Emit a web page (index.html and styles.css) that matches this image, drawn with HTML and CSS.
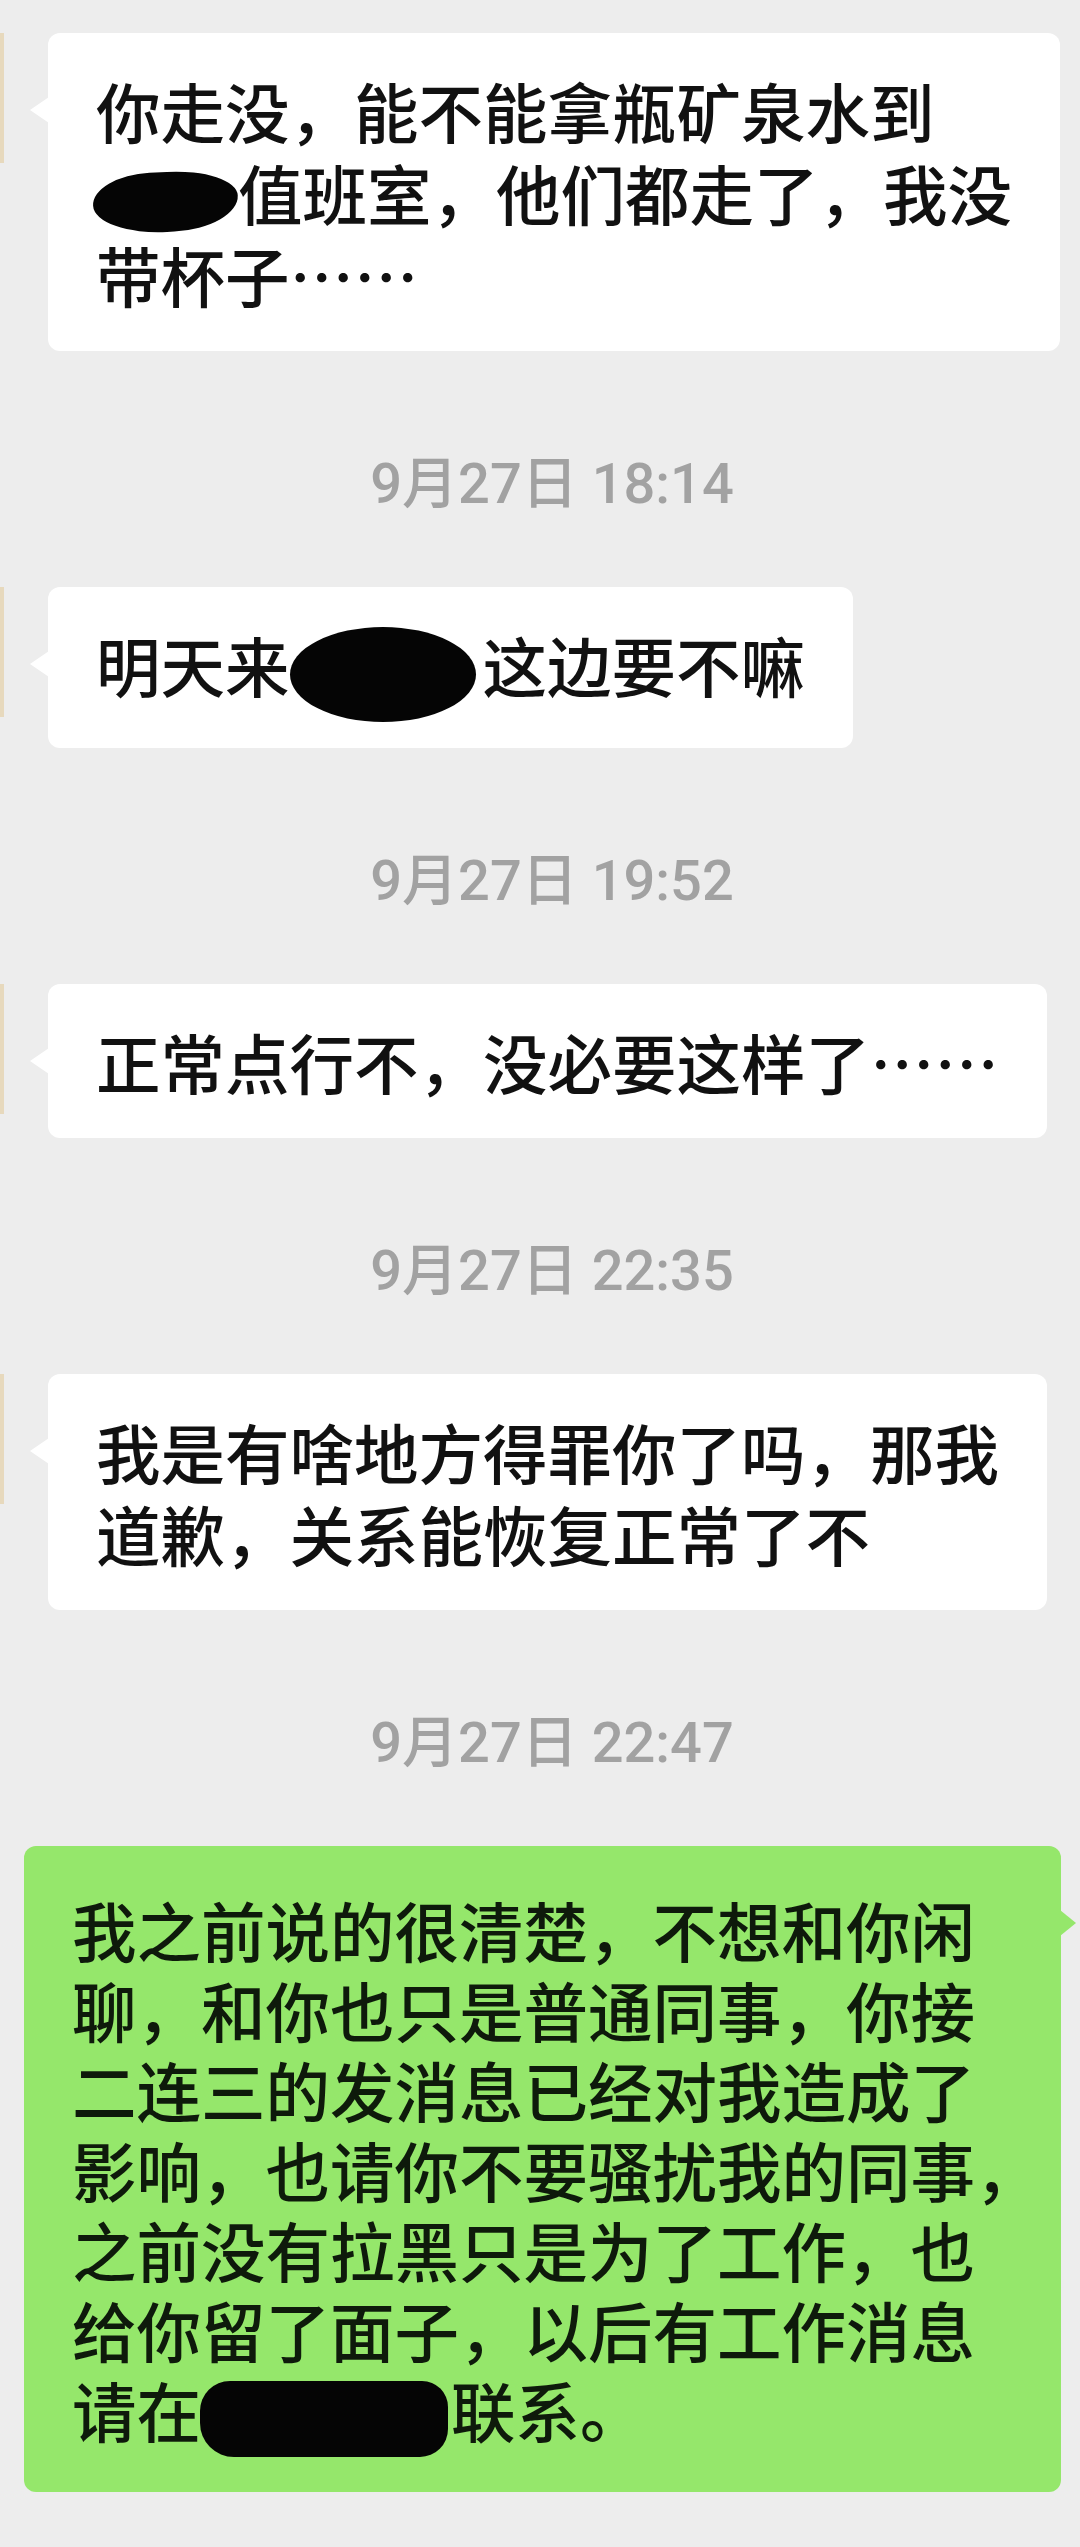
FILE: index.html
```html
<!DOCTYPE html>
<html lang="zh-CN">
<head>
    <meta charset="UTF-8">
    <meta name="viewport" content="width=device-width, initial-scale=1.0">
    <title>聊天记录</title>
    <link rel="stylesheet" href="styles.css">
</head>
<body>
    <div class="chat">
        <div class="row">
            <div class="avatar"></div>
            <div class="bubble bubble-in">你走没，能不能拿瓶矿泉水到<br><span class="blot blot-a"></span>值班室，他们都走了，我没<br>带杯子……</div>
        </div>

        <div class="time">9月27日 18:14</div>

        <div class="row">
            <div class="avatar"></div>
            <div class="bubble bubble-in">明天来<span class="blot blot-b"></span>这边要不嘛</div>
        </div>

        <div class="time">9月27日 19:52</div>

        <div class="row">
            <div class="avatar"></div>
            <div class="bubble bubble-in">正常点行不，没必要这样了……</div>
        </div>

        <div class="time">9月27日 22:35</div>

        <div class="row">
            <div class="avatar"></div>
            <div class="bubble bubble-in">我是有啥地方得罪你了吗，那我<br>道歉，关系能恢复正常了不</div>
        </div>

        <div class="time">9月27日 22:47</div>

        <div class="row row-out">
            <div class="bubble bubble-out">我之前说的很清楚，不想和你闲<br>聊，和你也只是普通同事，你接<br>二连三的发消息已经对我造成了<br>影响，也请你不要骚扰我的同事，<br>之前没有拉黑只是为了工作，也<br>给你留了面子，以后有工作消息<br>请在<span class="blot blot-c"></span>联系。</div>
        </div>
    </div>
</body>
</html>
```

FILE: styles.css
```css
html {
    background-color: #ededed;
}
body {
    margin: 0;
    padding: 0;
    background-color: #ededed;
    font-family: "Noto Sans CJK SC", sans-serif;
}
.chat {
    padding: 33px 0 54px;
}
.row {
    display: flex;
    align-items: flex-start;
}
.avatar {
    width: 4px;
    height: 130px;
    margin-right: 44px;
    background-color: #e7d9bd;
}
.bubble {
    position: relative;
    border-radius: 12px;
    font-size: 64.5px;
    font-weight: 500;
    white-space: nowrap;
}
.bubble-in {
    background-color: #fff;
    color: #111;
    line-height: 82px;
    padding: 36px 48px 36px 48px;
}
.bubble-in::before {
    content: "";
    position: absolute;
    left: -18px;
    top: 64px;
    border-top: 13px solid transparent;
    border-bottom: 13px solid transparent;
    border-right: 19px solid #fff;
}
.row-out {
    padding: 0 19px 0 24px;
}
.bubble-out {
    flex: 1;
    background-color: #95e76b;
    color: #0e1a0b;
    line-height: 80px;
    padding: 43px 20px 39px 48px;
}
.bubble-out::after {
    content: "";
    position: absolute;
    right: -15px;
    top: 64px;
    border-top: 13px solid transparent;
    border-bottom: 13px solid transparent;
    border-left: 16px solid #95e76b;
}
.time {
    margin: 103px 0 73px;
    padding-left: 24px;
    text-align: center;
    font-family: Roboto, "Noto Sans CJK SC", sans-serif;
    font-weight: 500;
    font-size: 56px;
    line-height: 60px;
    color: #a2a2a2;
}
.blot {
    display: inline-block;
    vertical-align: middle;
    background-color: #050505;
}
.blot-a {
    width: 145px;
    height: 60px;
    margin-left: -3px;
    border-radius: 40% 48% 45% 50% / 50% 45% 55% 50%;
    transform: rotate(-3deg);
}
.blot-b {
    width: 186px;
    height: 95px;
    margin: -10px 7px -10px 0;
    border-radius: 50%;
}
.blot-c {
    width: 248px;
    height: 76px;
    margin: -4px 3px -4px -1px;
    border-radius: 30px 26px 28px 34px;
}
```
